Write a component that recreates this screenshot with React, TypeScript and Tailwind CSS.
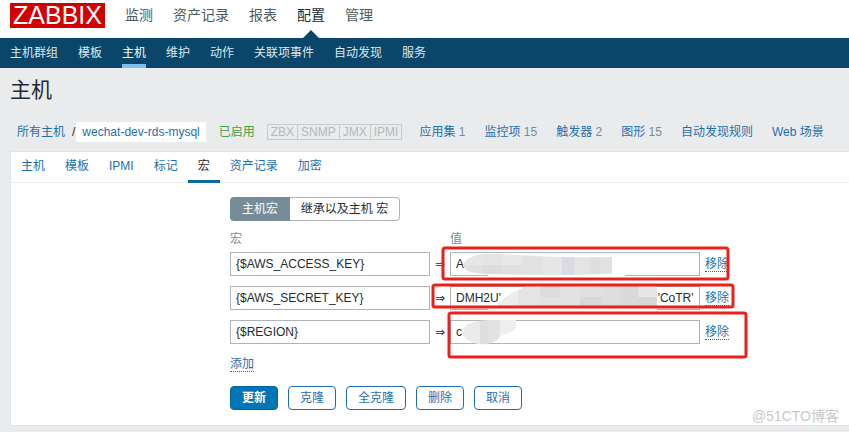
import React from "react";

const mainNav = ["监测", "资产记录", "报表", "配置", "管理"];
const subNav = ["主机群组", "模板", "主机", "维护", "动作", "关联项事件", "自动发现", "服务"];
const tabs = ["主机", "模板", "IPMI", "标记", "宏", "资产记录", "加密"];
const objects: { label: string; count?: number }[] = [
  { label: "应用集", count: 1 },
  { label: "监控项", count: 15 },
  { label: "触发器", count: 2 },
  { label: "图形", count: 15 },
  { label: "自动发现规则" },
  { label: "Web 场景" },
];
const macros = [
  { name: "{$AWS_ACCESS_KEY}", value: "A" },
  { name: "{$AWS_SECRET_KEY}", value: `DMH2U'${"\u00a0".repeat(47)}'CoTR'` },
  { name: "{$REGION}", value: "c" },
];
const actions = ["克隆", "全克隆", "删除", "取消"];

const link = "text-[#1f6fb0]";
const dotted = "border-b border-dotted border-[#1f6fb0] leading-[14px] text-[#1f6fb0]";
const field = "block h-6 w-full border border-[#b0b4b6] bg-white px-[5px] text-xs text-[#1f2c33] outline-none";

// Mosaic that hides the secret part of each value
const tiles: [number, number, number, number, string][] = [
  [462, 253, 20, 12, "#e6e6e6"],
  [462, 265, 20, 12, "#e0e0e0"],
  [482, 253, 20, 12, "#e4e4e4"],
  [482, 265, 20, 12, "#dcdcdc"],
  [502, 253, 20, 12, "#e8e8e8"],
  [502, 265, 20, 12, "#e0e0e0"],
  [522, 253, 20, 24, "#e2e2e2"],
  [542, 253, 20, 24, "#e6e6e6"],
  [562, 253, 12, 24, "#dadae2"],
  [574, 253, 16, 24, "#e4e4e4"],
  [590, 253, 10, 24, "#dedede"],
  [600, 253, 12, 24, "#e2e2e2"],
  [498, 286, 20, 22, "#ececec"],
  [518, 286, 22, 22, "#e4e4e4"],
  [540, 286, 20, 11, "#dcdcdc"],
  [540, 297, 20, 11, "#e2e2e2"],
  [560, 286, 20, 22, "#e2e2e2"],
  [580, 286, 22, 11, "#e0e0e0"],
  [580, 297, 22, 11, "#d8d8d8"],
  [602, 286, 18, 22, "#dedede"],
  [620, 286, 18, 22, "#dadada"],
  [638, 286, 20, 11, "#e6e6e6"],
  [638, 297, 20, 11, "#d8d8d8"],
  [462, 320, 18, 25, "#ebebeb"],
  [480, 320, 8, 25, "#dedede"],
  [488, 320, 12, 25, "#e2e2e2"],
  [500, 320, 16, 25, "#efefef"],
];

export default function App() {
  return (
    <div className="relative bg-[#eaebed] pb-[7px] font-['Liberation_Sans','Noto_Sans_CJK_SC',sans-serif] text-xs text-[#1f2c33]">
      <header>
        <div className="flex h-[38px] items-start bg-white px-[10px]">
          <a href="#home" className="mt-[3px] flex h-[25px] w-[95px] items-center justify-center bg-[#d40000] text-[25px] leading-[25px] text-white">
            ZABBIX
          </a>
          <nav className="ml-5 flex h-full gap-5 text-sm">
            {mainNav.map((item) => (
              <a key={item} href="#main" className={`flex h-full flex-col items-center justify-between pt-[5px] leading-5 ${item === "配置" ? "text-[#1f2c33]" : "text-[#4f5b61]"}`}>
                {item}
                {item === "配置" && <span className="h-0 w-0 border-x-8 border-b-8 border-x-transparent border-b-[#0a466a]" />}
              </a>
            ))}
          </nav>
        </div>
        <nav className="flex h-[30px] gap-5 bg-[#0a466a] px-[10px] text-white">
          {subNav.map((item) => (
            <a key={item} href="#sub" className={`border-b-4 pt-[5px] leading-5 ${item === "主机" ? "border-[#7fc1ee]" : "border-transparent text-[#dbe8f0]"}`}>
              {item}
            </a>
          ))}
        </nav>
      </header>

      <h1 className="px-[10px] pt-2 text-[21px] leading-7">主机</h1>

      <div className="mt-[18px] flex h-5 items-center whitespace-nowrap pl-[17px]">
        <a href="#all" className={link}>所有主机</a>
        <span className="ml-[7px]">/</span>
        <a href="#host" className={`ml-px flex h-5 items-center bg-white px-[6px] ${link}`}>wechat-dev-rds-mysql</a>
        <span className="ml-[13px] text-[#429e47]">已启用</span>
        <span className="ml-3 flex text-[#b4b9bc]">
          {["ZBX", "SNMP", "JMX", "IPMI"].map((s) => (
            <span key={s} className="-mr-px flex h-4 items-center border border-[#c8cccf] px-[3px]">{s}</span>
          ))}
        </span>
        <div className="ml-[18px] flex gap-[19px]">
          {objects.map((o) => (
            <span key={o.label}>
              <a href="#objects" className={link}>{o.label}</a>
              {o.count && <span className="text-[#768d99]"> {o.count}</span>}
            </span>
          ))}
        </div>
      </div>

      <main className="ml-[10px] mt-[9px] border border-r-0 border-[#dfe4e7] bg-white pb-[15px]">
        <nav className="flex h-[31px] border-b border-[#ebeef0]">
          {tabs.map((t) => (
            <a key={t} href="#tab" className={`h-[31px] px-[10px] pt-1 leading-5 ${t === "宏" ? "border-b-[3px] border-[#0f6d99] text-[#1f2c33]" : link}`}>
              {t}
            </a>
          ))}
        </nav>

        <form className="pl-[219px] pt-[14px]" onSubmit={(e) => e.preventDefault()}>
          <div className="flex">
            <button type="button" className="h-6 w-[60px] rounded-l-sm bg-[#768d99] text-white">主机宏</button>
            <button type="button" className="h-6 w-[110px] rounded-r-sm border border-l-0 border-[#b0b4b6]">继承以及主机 宏</button>
          </div>
          <table className="mt-2 table-fixed">
            <colgroup>
              <col className="w-[200px]" />
              <col className="w-5" />
              <col className="w-[250px]" />
              <col className="w-[50px]" />
            </colgroup>
            <thead>
              <tr className="h-[18px] text-left leading-4 text-[#768d99]">
                <th className="p-0 pt-[2px] font-normal">宏</th>
                <th className="p-0" />
                <th className="p-0 pt-[2px] font-normal">值</th>
                <th className="p-0" />
              </tr>
            </thead>
            <tbody>
              {macros.map((m) => (
                <tr key={m.name} className="h-[34px]">
                  <td className="p-0"><input aria-label="宏" className={field} defaultValue={m.name} /></td>
                  <td className="p-0 text-center font-['DejaVu_Sans',sans-serif]">⇒</td>
                  <td className="p-0"><input aria-label="值" className={field} defaultValue={m.value} /></td>
                  <td className="p-0 pl-[5px]"><button type="button" className={dotted}>移除</button></td>
                </tr>
              ))}
            </tbody>
          </table>
          <button type="button" className={`mt-2 ${dotted}`}>添加</button>
          <div className="mt-[14px] flex gap-[10px]">
            <button type="submit" className="h-6 rounded-sm border border-[#02659f] bg-[#0275b8] px-[11px] font-bold text-white">更新</button>
            {actions.map((a) => (
              <button key={a} type="button" className="h-6 rounded-sm border border-[#1f6fb0] px-[11px] text-[#1f6fb0]">{a}</button>
            ))}
          </div>
        </form>
      </main>

      <svg className="pointer-events-none absolute left-0 top-0" width="760" height="380" aria-hidden="true">
        <defs>
          <clipPath id="mask-shape">
            <path d="M463 265C466 256 480 253 500 254C530 256 570 258 612 257V274H600C560 276 520 275 490 274C474 274 464 272 463 265Z" />
            <path d="M498 304C506 294 518 291 526 286H657V308H500Z" />
            <path d="M463 332C464 322 476 320 496 320H516V328C510 334 502 334 500 337C494 344 482 346 474 343C466 340 463 337 463 332Z" />
          </clipPath>
        </defs>
        <path d="M488 275H625M488 309H657" stroke="#fff" strokeWidth="2" />
        <g clipPath="url(#mask-shape)">
          {tiles.map(([x, y, w, h, c]) => (
            <rect key={`${x}-${y}`} x={x} y={y} width={w} height={h} fill={c} />
          ))}
        </g>
        <g fill="none" stroke="#e8211c" strokeWidth="3">
          <rect x="443" y="248" width="285" height="31" rx="2" />
          <rect x="433" y="285" width="300" height="22" rx="2" />
          <rect x="449" y="313" width="297" height="44" rx="2" />
        </g>
      </svg>
      <span className="absolute bottom-[7px] right-[10px] text-sm text-[#c9c9c9]">@51CTO博客</span>
    </div>
  );
}
